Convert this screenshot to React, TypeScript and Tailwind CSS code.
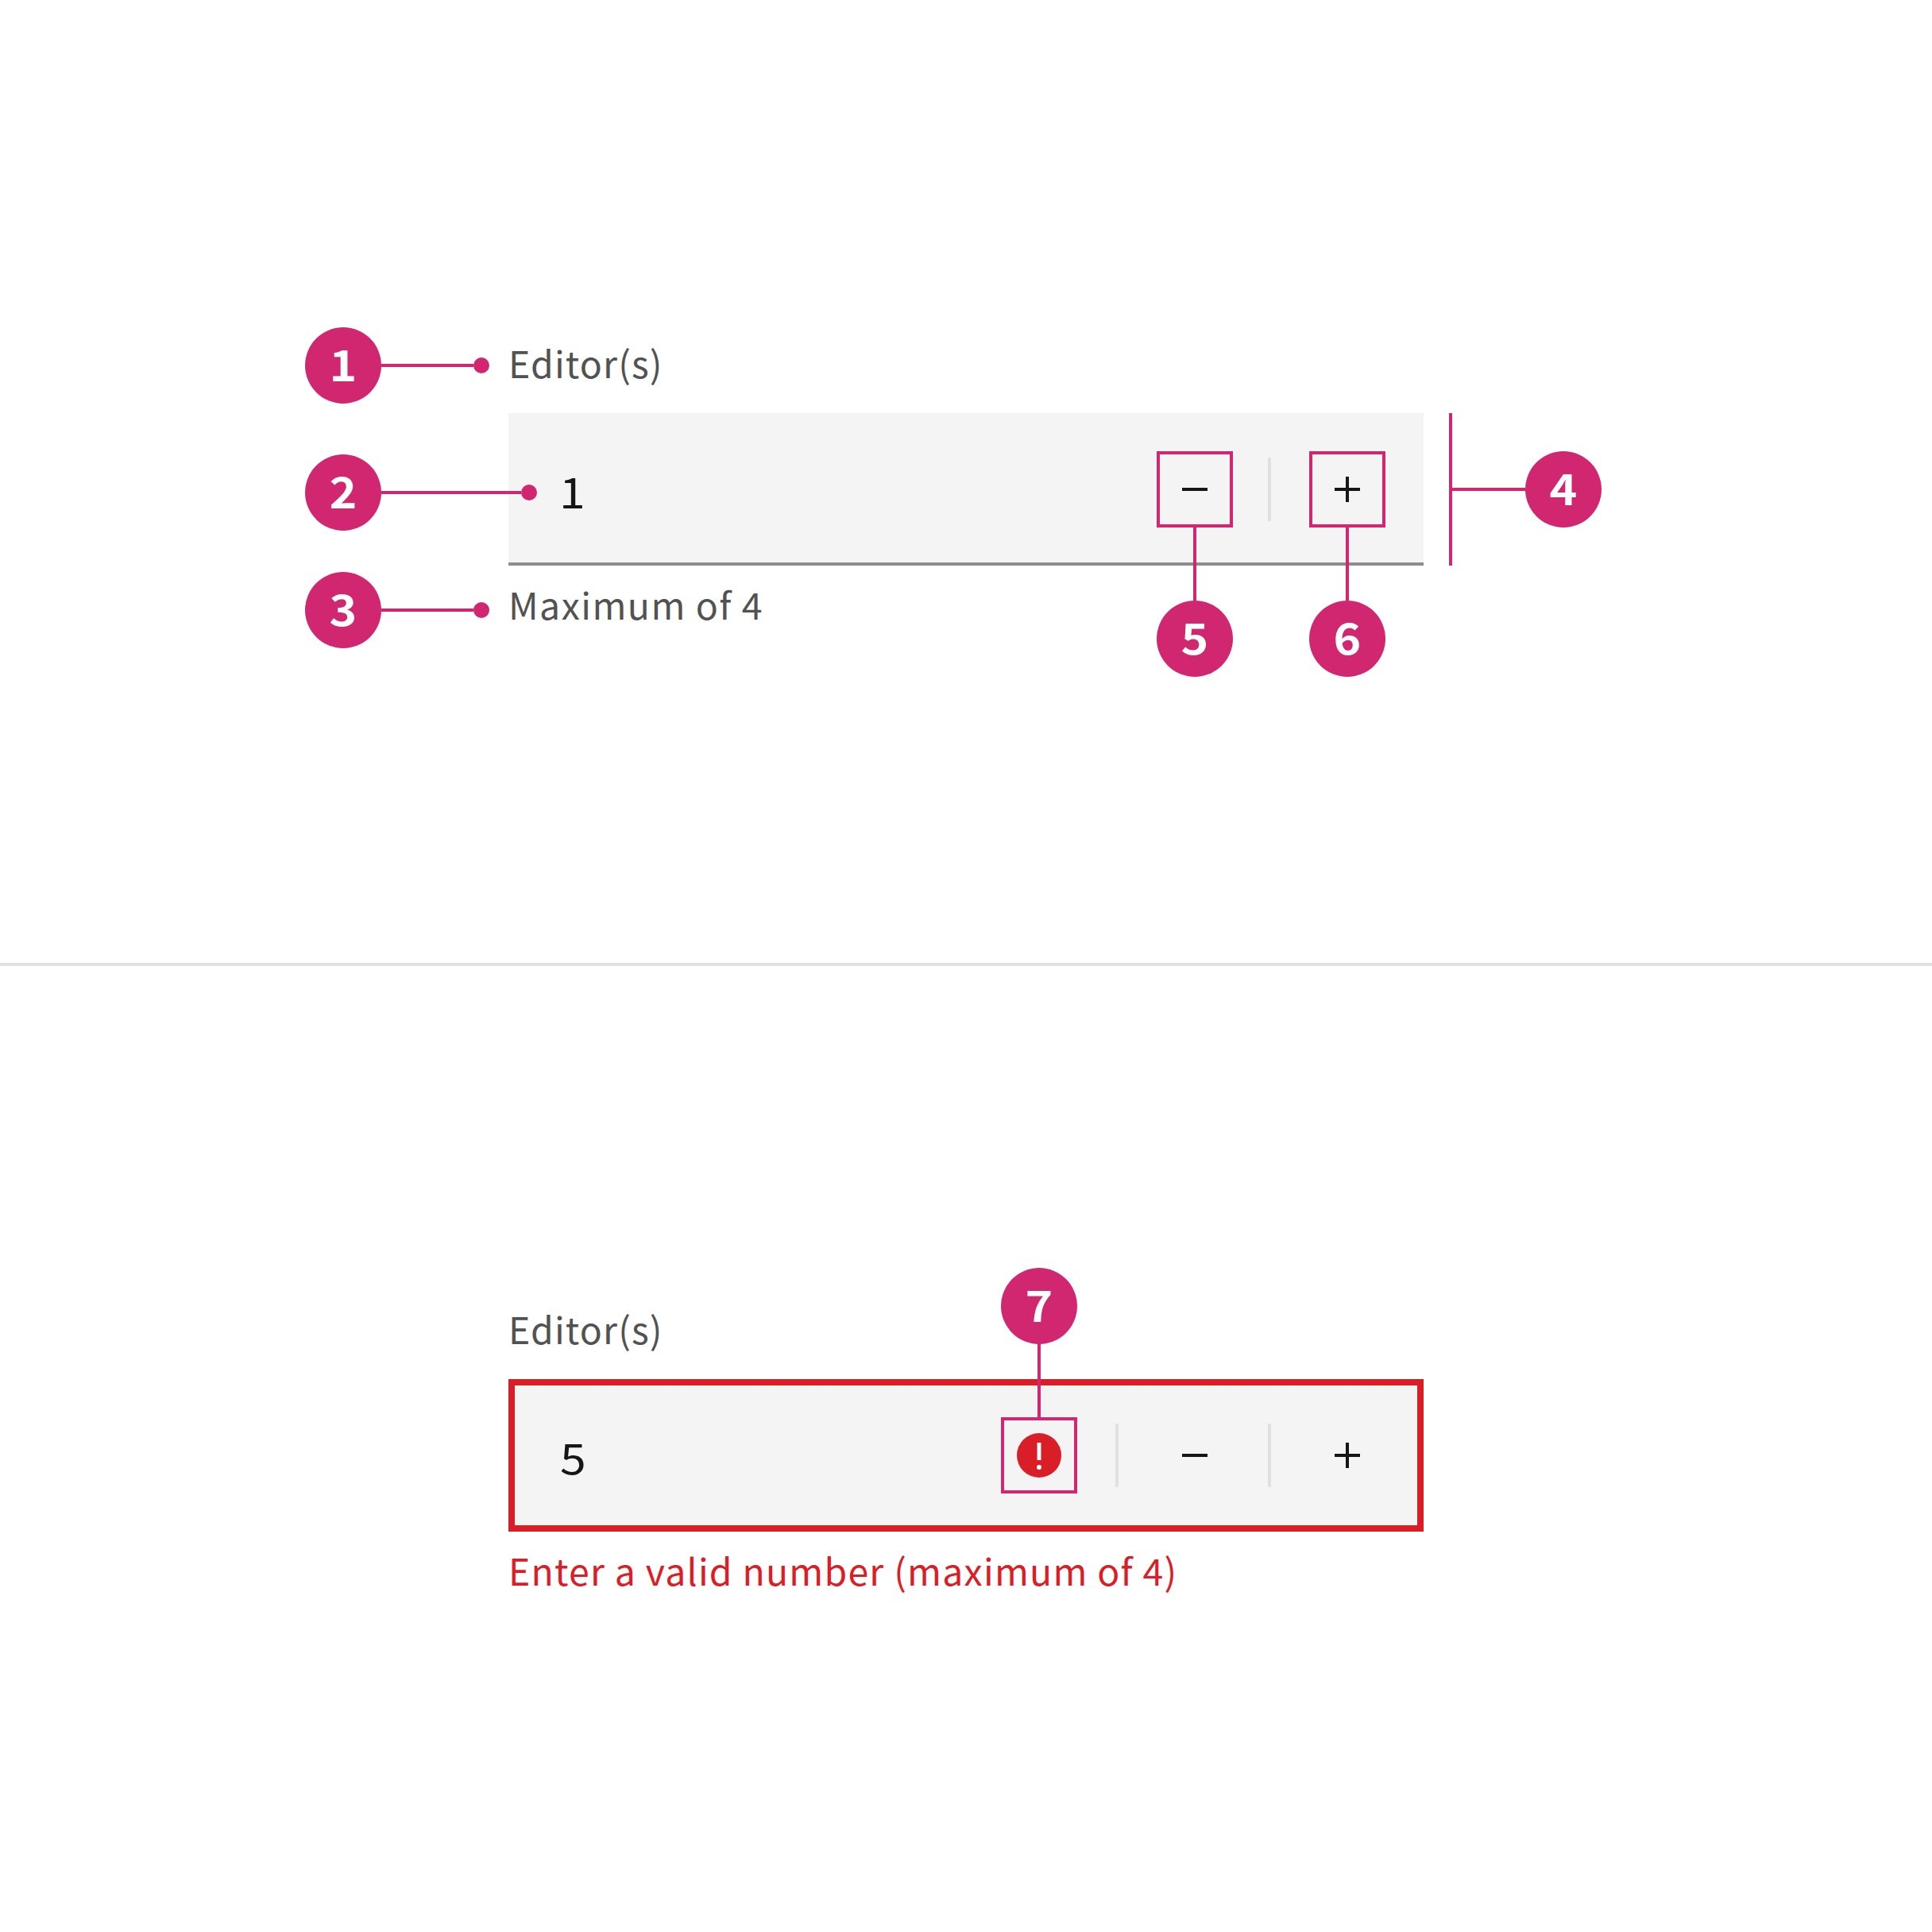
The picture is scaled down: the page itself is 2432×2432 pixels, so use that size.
import type { ReactNode } from 'react';

const PINK = 'bg-[#d12771]';

function Badge({ n }: { n: number }) {
  return (
    <div className={`flex size-24 shrink-0 items-center justify-center rounded-full text-white ${PINK}`}>
      <span className="-mt-[7px] block scale-x-[1.1] text-[53.6px] leading-[64px] font-bold">{n}</span>
    </div>
  );
}

/* Horizontal callout that sits left of its target: badge, rule, end dot. */
function Pointer({ n, rule, className }: { n: number; rule: string; className: string }) {
  return (
    <div className={`absolute flex items-center ${className}`}>
      <Badge n={n} />
      <div className={`h-1 ${rule} ${PINK}`} />
      <div className={`size-5 rounded-full ${PINK}`} />
    </div>
  );
}

/* Icon cell; when numbered it gets an outline and a badge on a vertical rule. */
function Cell({ n, above = false, children }: { n?: number; above?: boolean; children: ReactNode }) {
  return (
    <div className={`relative flex size-24 shrink-0 items-center justify-center ${n ? 'outline-4 -outline-offset-4 outline-[#d12771]' : ''}`}>
      {children}
      {n !== undefined && (
        <div className={`absolute left-0 flex w-24 items-center ${above ? 'bottom-24 flex-col' : 'top-24 flex-col-reverse'}`}>
          <Badge n={n} />
          <div className={`h-[92px] w-1 ${PINK}`} />
        </div>
      )}
    </div>
  );
}

function Minus() {
  return (
    <svg className="size-8" viewBox="0 0 32 32" fill="#161616">
      <path d="M0 14h32v4H0z" />
    </svg>
  );
}

function Plus() {
  return (
    <svg className="size-8" viewBox="0 0 32 32" fill="#161616">
      <path d="M14 0h4v14h14v4H18v14h-4V18H0v-4h14z" />
    </svg>
  );
}

function ErrorIcon() {
  return (
    <svg className="size-14" viewBox="0 0 56 56">
      <circle cx="28" cy="28" r="28" fill="#da1e28" />
      <path d="M25.55 12h4.9v22h-4.9z" fill="#fff" />
      <circle cx="28" cy="43" r="3" fill="#fff" />
    </svg>
  );
}

function Separator({ className = '' }: { className?: string }) {
  return <div className={`h-20 w-1 shrink-0 bg-[#e0e0e0] ${className}`} />;
}

function Label() {
  return (
    <label className="block text-[46.4px] leading-[64px] tracking-[1.15px] whitespace-nowrap text-[#525252]">
      Editor(s)
    </label>
  );
}

function Value({ children }: { children: ReactNode }) {
  return (
    <div className="mt-px flex-1 text-[53.6px] leading-[64px] text-[#161616]">
      <span className="inline-block origin-left scale-x-[1.1]">{children}</span>
    </div>
  );
}

export default function App() {
  return (
    <div className="h-[2432px] w-[2432px] overflow-hidden bg-white font-['Noto_Sans_CJK_SC','Noto_Sans',sans-serif]">
      <section className="h-[1216px] border-b-4 border-[#e0e0e0] pt-[424px] pl-[640px]">
        <div className="relative w-[1152px]">
          <Label />
          <div className="relative mt-8 flex h-48 items-center border-b-4 border-[#8d8d8d] bg-[#f4f4f4] pt-1 pr-12 pl-16">
            <Value>1</Value>
            <Cell n={5}><Minus /></Cell>
            <Separator className="mr-12 ml-11" />
            <Cell n={6}><Plus /></Cell>
            <div className="absolute top-0 left-[1184px] flex h-48 items-center">
              <div className={`h-48 w-1 ${PINK}`} />
              <div className={`h-1 w-[92px] ${PINK}`} />
              <Badge n={4} />
            </div>
          </div>
          <p className="mt-4 text-[46.4px] leading-[64px] tracking-[1.45px] whitespace-nowrap text-[#525252]">
            Maximum of 4
          </p>
          <Pointer n={1} rule="w-[116px]" className="-top-3 -left-64" />
          <Pointer n={2} rule="w-44" className="top-[148px] -left-64" />
          <Pointer n={3} rule="w-[116px]" className="top-[296px] -left-64" />
        </div>
      </section>

      <section className="h-[1216px] pt-[424px] pl-[640px]">
        <div className="w-[1152px]">
          <Label />
          <div className="mt-8 flex h-48 items-center border-8 border-[#da1e28] bg-[#f4f4f4] pr-10 pl-[57px]">
            <Value>5</Value>
            <Cell n={7} above><ErrorIcon /></Cell>
            <Separator className="mx-12" />
            <Cell><Minus /></Cell>
            <Separator className="mr-12 ml-11" />
            <Cell><Plus /></Cell>
          </div>
          <p className="mt-4 text-[46.4px] leading-[64px] tracking-[1.22px] whitespace-nowrap text-[#da1e28]">
            Enter a valid number (maximum of 4)
          </p>
        </div>
      </section>
    </div>
  );
}
